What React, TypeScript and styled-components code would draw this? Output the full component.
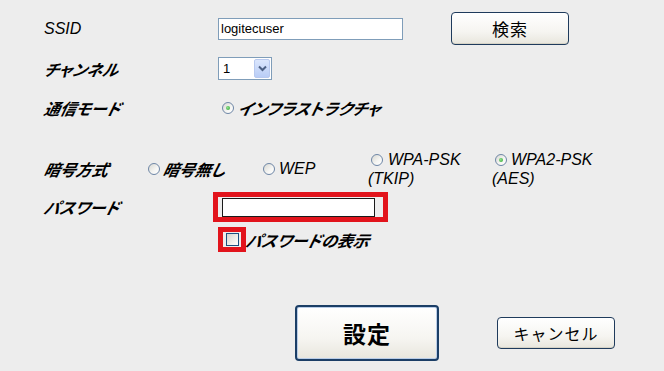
import styled, { createGlobalStyle } from "styled-components";

const GlobalStyle = createGlobalStyle`
  html, body {
    margin: 0;
    padding: 0;
    background: #ededed;
  }
`;

const FONT = `"Liberation Sans", "Noto Sans CJK JP", sans-serif`;

const Page = styled.div`
  width: 664px;
  height: 371px;
  overflow: hidden;
  background: #ededed;
  box-sizing: border-box;
  padding: 12px 0 0 44px;
  font-family: ${FONT};
  color: #000;
`;

const Row = styled.div<{ $h: number; $mt?: number }>`
  display: flex;
  align-items: center;
  height: ${(p) => p.$h}px;
  margin-top: ${(p) => p.$mt ?? 0}px;
`;

const Label = styled.span<{ $w?: number; $latin?: boolean }>`
  display: inline-block;
  width: ${(p) => (p.$w ? `${p.$w}px` : "auto")};
  flex-shrink: 0;
  font-size: 16px;
  font-style: italic;
  font-weight: ${(p) => (p.$latin ? 400 : 700)};
  font-feature-settings: "palt";
  white-space: nowrap;
`;

/* the CJK font has no italic face, so slant the Japanese text by hand */
const Jp = styled.span`
  display: inline-block;
  transform: skewX(-13deg);
  transform-origin: 0 60%;
`;

const TextInput = styled.div<{ $w: number; $h: number; $border: string }>`
  width: ${(p) => p.$w}px;
  height: ${(p) => p.$h}px;
  box-sizing: border-box;
  border: 1px solid ${(p) => p.$border};
  background: #fff;
  padding-left: 2px;
  font-size: 13px;
  line-height: ${(p) => p.$h - 2}px;
  flex-shrink: 0;
`;

const Button = styled.button<{ $w: number; $h: number; $size: number; $bold?: boolean; $ml: number }>`
  width: ${(p) => p.$w}px;
  height: ${(p) => p.$h}px;
  margin-left: ${(p) => p.$ml}px;
  flex-shrink: 0;
  box-sizing: border-box;
  border: ${(p) => (p.$bold ? "2px solid #1b3e66" : "1px solid #1f3b5c")};
  border-radius: 4px;
  background: linear-gradient(#ffffff 0%, #f6f5f1 60%, #e8e6dd 100%);
  box-shadow: ${(p) => (p.$bold ? "inset 0 0 0 1px #b9cde8" : "inset 0 -1px 0 #d6d3c6")};
  font-family: ${FONT};
  font-size: ${(p) => p.$size}px;
  font-weight: ${(p) => (p.$bold ? 700 : 400)};
  letter-spacing: 1px;
  color: #000;
  padding: 0;
  cursor: pointer;
`;

const Select = styled.div`
  width: 54px;
  height: 23px;
  box-sizing: border-box;
  border: 1px solid #7f9db9;
  background: #fff;
  display: flex;
  align-items: center;
  justify-content: space-between;
  padding: 1px;
  font-size: 13px;
`;

const SelectValue = styled.span`
  padding-left: 3px;
`;

const SelectArrow = styled.span`
  width: 16px;
  height: 19px;
  box-sizing: border-box;
  border: 1px solid #b8c9ef;
  border-radius: 2px;
  background: linear-gradient(#dbe6fd, #b9cdf6);
  display: flex;
  align-items: center;
  justify-content: center;
`;

const Option = styled.span<{ $w?: number; $ml?: number }>`
  display: inline-flex;
  align-items: center;
  width: ${(p) => (p.$w ? `${p.$w}px` : "auto")};
  margin-left: ${(p) => p.$ml ?? 0}px;
  flex-shrink: 0;
`;

const WrapOption = styled.span<{ $w: number }>`
  display: block;
  width: ${(p) => p.$w}px;
  line-height: 19px;
  flex-shrink: 0;
  font-size: 16px;
  font-style: italic;
  white-space: nowrap;
`;

const Radio = styled.span<{ $checked?: boolean; $gap?: number }>`
  position: relative;
  display: inline-block;
  vertical-align: -1px;
  width: 12px;
  height: 12px;
  box-sizing: border-box;
  margin: 0 ${(p) => p.$gap ?? 4}px 0 3px;
  border-radius: 50%;
  border: 1px solid #6e86a6;
  background: linear-gradient(135deg, #d8d8d2 0%, #f6f6f4 60%, #ffffff 100%);
  flex-shrink: 0;

  &::after {
    content: "";
    display: ${(p) => (p.$checked ? "block" : "none")};
    position: absolute;
    left: 3px;
    top: 3px;
    width: 4px;
    height: 4px;
    border-radius: 50%;
    background: radial-gradient(circle at 40% 40%, #8fe08f, #2aa32a);
  }
`;

const RedFrame = styled.div<{ $w: number; $h: number; $pl: number }>`
  width: ${(p) => p.$w}px;
  height: ${(p) => p.$h}px;
  box-sizing: border-box;
  border: 5px solid #e2141c;
  padding-left: ${(p) => p.$pl}px;
  display: flex;
  align-items: center;
  flex-shrink: 0;
`;

const PasswordBox = styled.div`
  width: 153px;
  height: 19px;
  box-sizing: border-box;
  border: 1px solid #1a1a1a;
  background: #fff;
`;

const Checkbox = styled.span`
  width: 13px;
  height: 13px;
  box-sizing: border-box;
  border: 1px solid #1c5180;
  background: linear-gradient(135deg, #d4d4ce 0%, #f0f0ec 60%, #ffffff 100%);
`;

const Spacer = styled.span<{ $w: number }>`
  width: ${(p) => p.$w}px;
  flex-shrink: 0;
`;

export default function App() {
  return (
    <>
      <GlobalStyle />
      <Page>
        <Row $h={33}>
          <Label $latin $w={174}>SSID</Label>
          <TextInput $w={185} $h={22} $border="#7f9db9">
            logitecuser
          </TextInput>
          <Button $w={118} $h={33} $size={17} $ml={48}>
            検索
          </Button>
        </Row>

        <Row $h={47}>
          <Label $w={174}><Jp>チャンネル</Jp></Label>
          <Select>
            <SelectValue>1</SelectValue>
            <SelectArrow>
              <svg width="9" height="7" viewBox="0 0 9 7">
                <polyline points="1,1.5 4.5,5 8,1.5" fill="none" stroke="#4d6185" strokeWidth="2" />
              </svg>
            </SelectArrow>
          </Select>
        </Row>

        <Row $h={32}>
          <Label $w={174}><Jp>通信モード</Jp></Label>
          <Option $ml={1}>
            <Radio $checked />
            <Label><Jp>インフラストラクチャ</Jp></Label>
          </Option>
        </Row>

        <Row $h={38} $mt={26}>
          <Label $w={101}><Jp>暗号方式</Jp></Label>
          <Option $w={115}>
            <Radio $gap={3} />
            <Label><Jp>暗号無し</Jp></Label>
          </Option>
          <Option $w={108}>
            <Radio $gap={4} />
            <Label $latin>WEP</Label>
          </Option>
          <WrapOption $w={124}>
            <Radio $gap={5} />
            WPA-PSK
            <br />
            (TKIP)
          </WrapOption>
          <WrapOption $w={120}>
            <Radio $checked $gap={4} />
            WPA2-PSK
            <br />
            (AES)
          </WrapOption>
        </Row>

        <Row $h={38}>
          <Label $w={169}><Jp>パスワード</Jp></Label>
          <RedFrame $w={175} $h={30} $pl={4}>
            <PasswordBox />
          </RedFrame>
        </Row>

        <Row $h={27}>
          <Spacer $w={174} />
          <RedFrame $w={28} $h={25} $pl={3}>
            <Checkbox />
          </RedFrame>
          <Label><Jp>パスワードの表示</Jp></Label>
        </Row>

        <Row $h={56} $mt={52}>
          <Button $w={144} $h={56} $size={23} $bold $ml={251}>
            設定
          </Button>
          <Button $w={118} $h={32} $size={16} $ml={58}>
            キャンセル
          </Button>
        </Row>
      </Page>
    </>
  );
}
